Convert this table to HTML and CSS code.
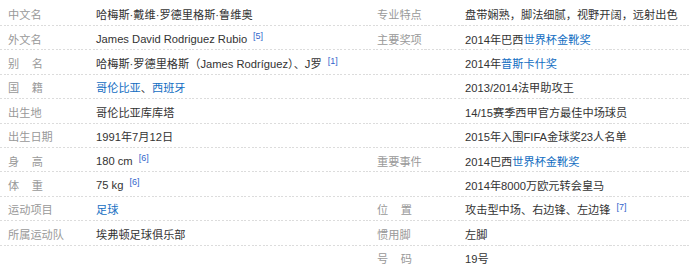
FILE: index.html
```html
<!DOCTYPE html>
<html lang="zh-CN">
<head>
<meta charset="utf-8">
<title>基本信息</title>
<link rel="stylesheet" href="styles.css">
</head>
<body>
<div class="info">
  <dl class="col col-left">
    <div class="row"><dt>中文名</dt><dd>哈梅斯·戴维·罗德里格斯·鲁维奥</dd></div>
    <div class="row"><dt>外文名</dt><dd>James David Rodriguez Rubio<sup class="ref">[5]</sup></dd></div>
    <div class="row"><dt class="sp">别名</dt><dd>哈梅斯·罗德里格斯（James Rodríguez）、J罗<sup class="ref">[1]</sup></dd></div>
    <div class="row"><dt class="sp">国籍</dt><dd><a class="link">哥伦比亚</a>、<a class="link">西班牙</a></dd></div>
    <div class="row"><dt>出生地</dt><dd>哥伦比亚库库塔</dd></div>
    <div class="row"><dt>出生日期</dt><dd>1991年7月12日</dd></div>
    <div class="row"><dt class="sp">身高</dt><dd>180 cm<sup class="ref">[6]</sup></dd></div>
    <div class="row"><dt class="sp">体重</dt><dd>75 kg<sup class="ref">[6]</sup></dd></div>
    <div class="row"><dt>运动项目</dt><dd><a class="link">足球</a></dd></div>
    <div class="row"><dt>所属运动队</dt><dd>埃弗顿足球俱乐部</dd></div>
  </dl>
  <dl class="col col-right">
    <div class="row"><dt>专业特点</dt><dd>盘带娴熟，脚法细腻，视野开阔，远射出色</dd></div>
    <div class="row"><dt>主要奖项</dt><dd>2014年巴西<a class="link">世界杯金靴奖</a></dd></div>
    <div class="row"><dt></dt><dd>2014年<a class="link">普斯卡什奖</a></dd></div>
    <div class="row"><dt></dt><dd>2013/2014法甲助攻王</dd></div>
    <div class="row"><dt></dt><dd>14/15赛季西甲官方最佳中场球员</dd></div>
    <div class="row"><dt></dt><dd>2015年入围FIFA金球奖23人名单</dd></div>
    <div class="row"><dt>重要事件</dt><dd>2014巴西<a class="link">世界杯金靴奖</a></dd></div>
    <div class="row"><dt></dt><dd>2014年8000万欧元转会皇马</dd></div>
    <div class="row"><dt class="sp">位置</dt><dd>攻击型中场、右边锋、左边锋<sup class="ref">[7]</sup></dd></div>
    <div class="row"><dt>惯用脚</dt><dd>左脚</dd></div>
    <div class="row"><dt class="sp">号码</dt><dd>19号</dd></div>
  </dl>
</div>
</body>
</html>
```
FILE: styles.css
```css
html, body {
  margin: 0;
  padding: 0;
  background: #ffffff;
}

body {
  font-family: "Liberation Sans", Arial, "Noto Sans CJK SC", sans-serif;
  font-size: 11.2px;
  color: #333333;
}

.info {
  display: flex;
  padding-top: 1.6px;
}

.col {
  margin: 0;
  padding: 0;
}

.col-left {
  width: 369px;
}

.col-right {
  flex: 1;
}

.row {
  display: flex;
  align-items: center;
  height: 24.4px;
  padding-top: 1px;
  box-sizing: border-box;
  background-image: repeating-linear-gradient(to right, #dcdcdc 0, #dcdcdc 2px, transparent 2px, transparent 3.7px);
  background-size: 100% 1px;
  background-position: left bottom;
  background-repeat: no-repeat;
}

dt {
  width: 88px;
  padding-left: 8px;
  flex: none;
  color: #999999;
  white-space: nowrap;
}

dt.sp {
  letter-spacing: 12.5px;
}

dd {
  margin: 0;
  white-space: nowrap;
}

.link {
  color: #136ec2;
  text-decoration: none;
}

.ref {
  font-size: 9px;
  color: #3366cc;
  margin-left: 6px;
  vertical-align: 4px;
  line-height: 0;
}
```
